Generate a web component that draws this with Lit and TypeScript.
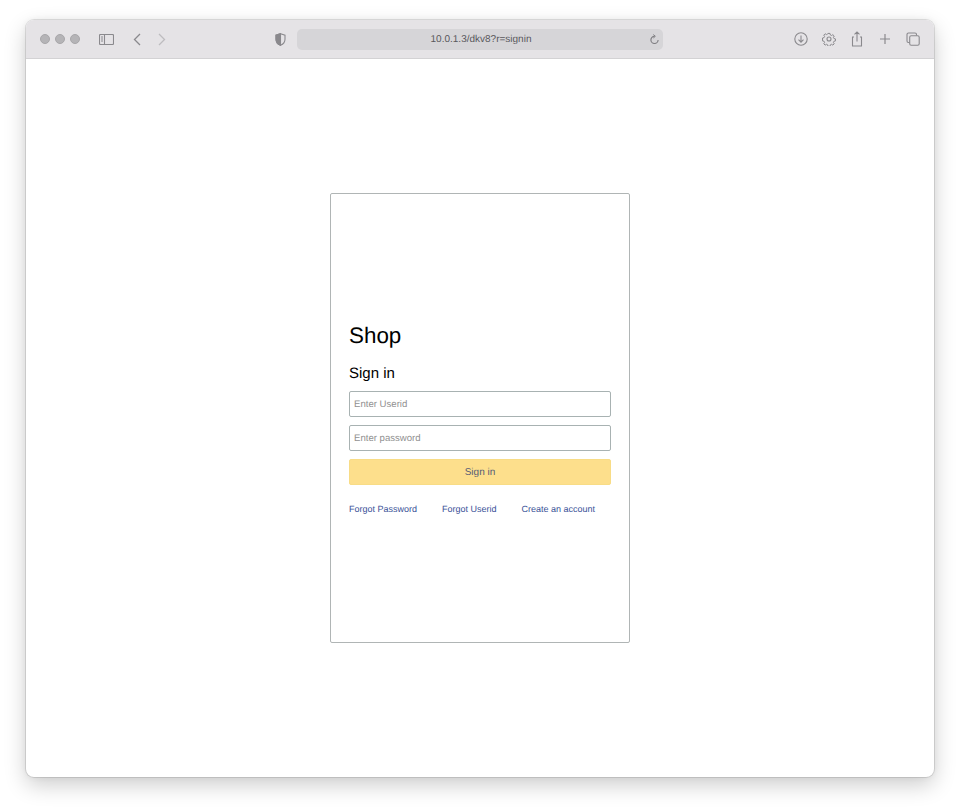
import { LitElement, html, css } from "lit";
import { customElement } from "lit/decorators.js";

@customElement("app-root")
export class AppRoot extends LitElement {
  static styles = css`
    :host { display: block; height: 809px; box-sizing: border-box; padding: 20px 26px 32px; background: #fff; font-family: "Liberation Sans", Arial, sans-serif; overflow: hidden; text-rendering: geometricPrecision; }
    .window { height: 757px; display: flex; flex-direction: column; border-radius: 8px; background: #fff; box-shadow: 0 0 0 1px rgba(0,0,0,.1), 0 8px 22px rgba(0,0,0,.2), 0 0 6px rgba(0,0,0,.06); overflow: hidden; }
    .toolbar { height: 38px; flex: none; display: flex; align-items: center; background: #e5e3e6; border-bottom: 1px solid #d3d2d4; padding-left: 14px; color: #8a898d; }
    .toolbar svg { display: block; flex: none; fill: none; stroke: currentColor; stroke-width: 1.1; }
    .lights { display: flex; gap: 5px; }
    .lights i { width: 10px; height: 10px; border-radius: 50%; background: #b5b4b7; border: .5px solid #a8a7aa; box-sizing: border-box; display: block; }
    .sidebar { margin-left: 19px; }
    .back { margin-left: 19px; }
    .fwd { margin-left: 17px; color: #bdbcbf; }
    .shield { margin-left: 109px; }
    .url { margin-left: 11px; width: 366px; height: 21px; border-radius: 5px; background: #d6d5d8; display: flex; align-items: center; box-sizing: border-box; position: relative; justify-content: center; font-size: 10px; color: #59585c; padding-left: 2px; }
    .reload { position: absolute; right: 3px; top: 5px; color: #7c7b7f; }
    .right { margin-left: auto; display: flex; align-items: center; gap: 14px; padding-right: 14px; }
    .content { flex: 1; display: flex; justify-content: center; padding-top: 134px; }
    .card { width: 300px; height: 450px; box-sizing: border-box; border: 1px solid #b0b5b5; border-radius: 2px; padding: 128px 18px 0; display: flex; flex-direction: column; }
    .inner { display: flex; flex-direction: column; }
    h1 { margin: 0; font-size: 22.4px; font-weight: 400; line-height: 28px; color: #000; }
    h2 { margin: 14px 0 8px; font-size: 15px; font-weight: 400; line-height: 19px; color: #000; }
    .field { height: 26px; box-sizing: border-box; border: 1px solid #a8b2b2; border-radius: 2px; font: 9.6px "Liberation Sans", Arial, sans-serif; text-rendering: geometricPrecision; padding: 0 4px; margin: 0 0 8px; outline: none; width: 100%; background: #fff; }
    .field::placeholder { color: #919191; opacity: 1; }
    .btn { height: 26px; box-sizing: border-box; border: 1px solid #f8dc86; border-radius: 2px; background: #fddf8c; color: #555b75; font: 10px "Liberation Sans", Arial, sans-serif; text-rendering: geometricPrecision; padding: 0; margin: 0; }
    .links { display: flex; margin-top: 18px; font-size: 9px; line-height: 12px; white-space: nowrap; }
    .links a { color: #3a5298; text-decoration: none; }
    .links a + a { margin-left: 25px; }
  `;

  render() {
    return html`<div class="window">
      <div class="toolbar">
        <div class="lights"><i></i><i></i><i></i></div>
        <svg class="sidebar" width="15" height="11" viewBox="0 0 15 11"><rect x=".5" y=".5" width="14" height="10" rx="1"/><path d="M5.5.5v10M2 3h2M2 5h2M2 7h2"/></svg>
        <svg class="back" width="8" height="13" viewBox="0 0 8 13"><path d="M7 1 1.5 6.5 7 12" stroke-width="1.3"/></svg>
        <svg class="fwd" width="8" height="13" viewBox="0 0 8 13"><path d="M1 1l5.5 5.5L1 12" stroke-width="1.3"/></svg>
        <svg class="shield" width="11" height="13" viewBox="0 0 11 13"><path d="M5.5.7 10 2.2v4c0 3-2 5-4.500 6.100C3 11.200 1 9.200 1 6.200v-4z"/><path d="M5.500.7 1 2.200v4c0 3 2 5 4.500 6.100z" fill="currentColor"/></svg>
        <div class="url">10.0.1.3/dkv8?r=signin
          <svg class="reload" width="11" height="11" viewBox="0 0 11 11"><path d="M5.500 2.300a3.600 3.600 0 1 0 3.600 3.600"/><path d="M4.300.6 6.300 2.300 4.300 4" stroke-width="1"/></svg>
        </div>
        <div class="right">
          <svg width="14" height="14" viewBox="0 0 14 14"><circle cx="7" cy="7" r="6.200"/><path d="M7 3.500v6.500M4.500 7.700 7 10.200l2.500-2.500"/></svg>
          <svg width="14" height="14" viewBox="0 0 14 14"><circle cx="7" cy="7" r="2"/><path d="M5.900.8h2.200l.4 1.700 1.300.6 1.500-.9 1.500 1.500-.9 1.500.6 1.300 1.700.4v2.200l-1.700.4-.6 1.300.9 1.500-1.500 1.500-1.500-.9-1.300.6-.4 1.700H5.900l-.4-1.700-1.300-.6-1.500.9-1.500-1.500.9-1.500-.6-1.300-1.700-.4V5.900l1.700-.4.6-1.300-.9-1.500 1.500-1.500 1.500.9 1.300-.6z" transform="translate(.7 .7) scale(.9)"/></svg>
          <svg width="14" height="16" viewBox="0 0 14 16"><path d="M4 6H2.500v9h9V6H10M7 10.500V1M4.500 3.300 7 .9l2.500 2.400"/></svg>
          <svg width="14" height="14" viewBox="0 0 14 14"><path d="M7 2v10M2 7h10" stroke-width="1.200"/></svg>
          <svg width="14" height="14" viewBox="0 0 14 14"><path d="M3.500 10.500H2.500a1.500 1.500 0 0 1-1.500-1.500V2.500A1.500 1.500 0 0 1 2.500 1H9a1.500 1.500 0 0 1 1.500 1.500v1"/><rect x="3.700" y="3.700" width="9.500" height="9.500" rx="1.500"/></svg>
        </div>
      </div>
      <div class="content">
        <div class="card">
          <div class="inner">
            <h1>Shop</h1>
            <h2>Sign in</h2>
            <input class="field" placeholder="Enter Userid" />
            <input class="field" type="password" placeholder="Enter password" />
            <button class="btn">Sign in</button>
            <div class="links">
              <a href="#">Forgot Password</a>
              <a href="#">Forgot Userid</a>
              <a href="#">Create an account</a>
            </div>
          </div>
        </div>
      </div>
    </div>`;
  }
}
